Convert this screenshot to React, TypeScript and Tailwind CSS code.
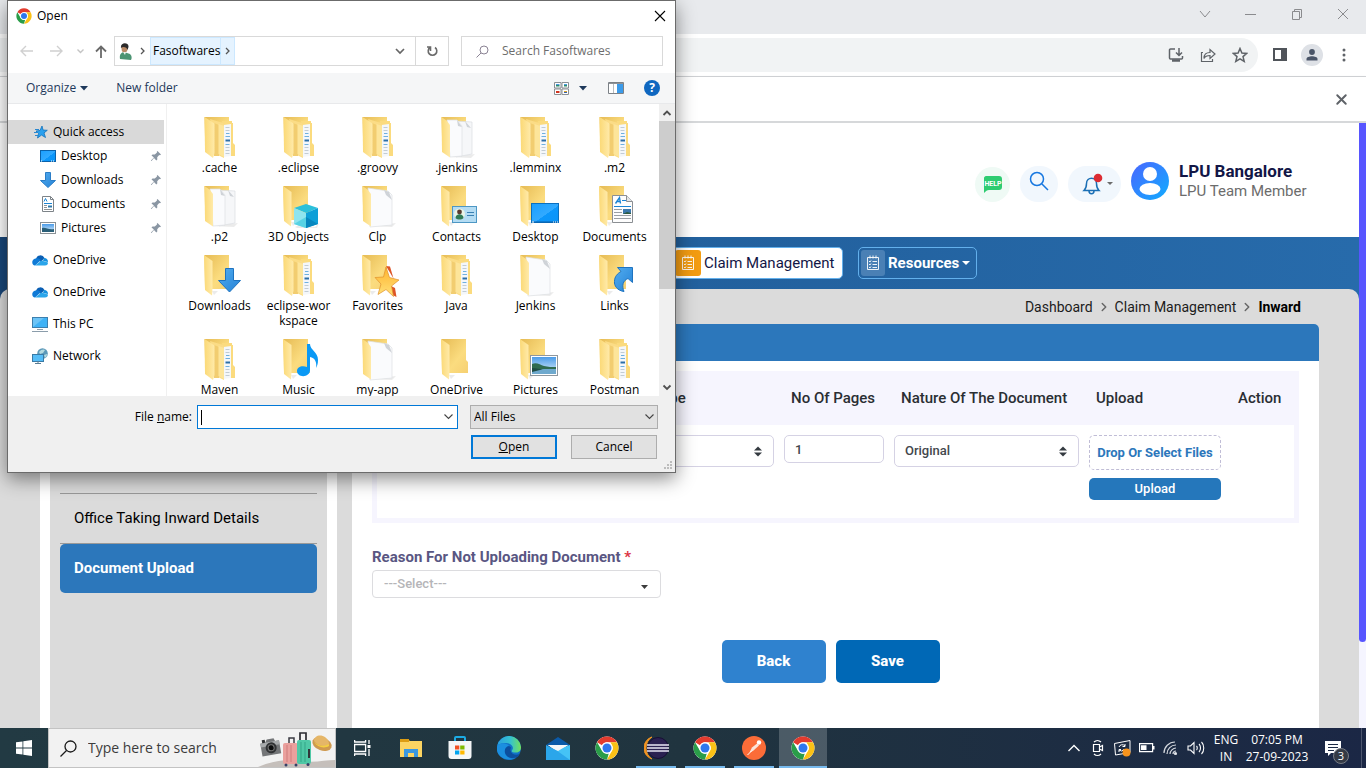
import React from "react";
import { ChevronRight, X } from "lucide-react";

type FolderKind = "files" | "doc" | "docs" | "plain";
type Overlay = "cube" | "contact" | "desktop" | "document" | "download" | "star" | "link" | "music" | "picture";

const folders: { name: string; kind: FolderKind; overlay?: Overlay }[] = [
  { name: ".cache", kind: "files" },
  { name: ".eclipse", kind: "files" },
  { name: ".groovy", kind: "files" },
  { name: ".jenkins", kind: "docs" },
  { name: ".lemminx", kind: "files" },
  { name: ".m2", kind: "files" },
  { name: ".p2", kind: "docs" },
  { name: "3D Objects", kind: "plain", overlay: "cube" },
  { name: "Clp", kind: "doc" },
  { name: "Contacts", kind: "plain", overlay: "contact" },
  { name: "Desktop", kind: "plain", overlay: "desktop" },
  { name: "Documents", kind: "plain", overlay: "document" },
  { name: "Downloads", kind: "plain", overlay: "download" },
  { name: "eclipse-wor kspace", kind: "files" },
  { name: "Favorites", kind: "plain", overlay: "star" },
  { name: "Java", kind: "files" },
  { name: "Jenkins", kind: "doc" },
  { name: "Links", kind: "plain", overlay: "link" },
  { name: "Maven", kind: "files" },
  { name: "Music", kind: "plain", overlay: "music" },
  { name: "my-app", kind: "doc" },
  { name: "OneDrive", kind: "plain" },
  { name: "Pictures", kind: "plain", overlay: "picture" },
  { name: "Postman", kind: "files" },
];

function Gradients() {
  return (
    <svg width="0" height="0" className="absolute" aria-hidden="true">
      <defs>
        <linearGradient id="flap" x1="0" x2="1" y1="0" y2="0">
          <stop offset="0" stopColor="#fbd976" />
          <stop offset="1" stopColor="#ffeaa9" />
        </linearGradient>
        <linearGradient id="back" x1="0" x2="1" y1="0" y2="1">
          <stop offset="0" stopColor="#e6bb54" />
          <stop offset="0.6" stopColor="#fbdc7f" />
          <stop offset="1" stopColor="#f6d072" />
        </linearGradient>
        <linearGradient id="screen" x1="0" x2="1" y1="0" y2="1">
          <stop offset="0" stopColor="#1a9fff" />
          <stop offset="0.55" stopColor="#32aaff" />
          <stop offset="0.56" stopColor="#0c97fb" />
          <stop offset="1" stopColor="#0a94f8" />
        </linearGradient>
        <linearGradient id="arrow" x1="0" x2="1" y1="0" y2="1">
          <stop offset="0" stopColor="#52adf0" />
          <stop offset="1" stopColor="#2582d6" />
        </linearGradient>
        <linearGradient id="sky" x1="0" x2="0" y1="0" y2="1">
          <stop offset="0" stopColor="#4a9be8" />
          <stop offset="1" stopColor="#e3f1fa" />
        </linearGradient>
        <linearGradient id="gold" x1="0" x2="0" y1="0" y2="1">
          <stop offset="0" stopColor="#ffb32e" />
          <stop offset="1" stopColor="#ffe27a" />
        </linearGradient>
        <linearGradient id="edgeTop" x1="0" x2="1" y1="0" y2="0">
          <stop offset="0" stopColor="#2a9fe0" />
          <stop offset="0.55" stopColor="#35c1cf" />
          <stop offset="1" stopColor="#72e05c" />
        </linearGradient>
        <linearGradient id="avatarBlue" x1="0" x2="1" y1="0" y2="1">
          <stop offset="0" stopColor="#4a66ff" />
          <stop offset="1" stopColor="#10adff" />
        </linearGradient>
      </defs>
    </svg>
  );
}

function OverlayArt({ kind }: { kind: Overlay }) {
  switch (kind) {
    case "cube":
      return (
        <g>
          <path d="M20 46l4-2 16 2 4-4-2 5H22z" fill="#000" opacity="0.08" />
          <path d="M19 27l12-4 12 4-12 5z" fill="#2bc0da" />
          <path d="M19 27l12 5v15l-12-4z" fill="#8ee4ee" />
          <path d="M19 43l12-7v11z" fill="#57d2e4" />
          <path d="M43 27l-12 5v15l12-4z" fill="#0d9fd8" />
          <path d="M43 43l-12-7v11z" fill="#0787bf" />
        </g>
      );
    case "contact":
      return (
        <g>
          <rect x="19.5" y="25.5" width="24" height="16" fill="#b4dcf3" stroke="#4d97c4" />
          <circle cx="26.500" cy="33" r="5.500" fill="#e9f4e6" />
          <circle cx="26.500" cy="31" r="2.400" fill="#5a3c2e" />
          <path d="M22.500 37c0-5 8-5 8 0-2 2-6 2-8 0z" fill="#2f7a55" />
          <path d="M34 31.500h7M34 34.500h7" stroke="#3a80b3" />
        </g>
      );
    case "desktop":
      return (
        <g>
          <rect x="19.500" y="22.500" width="27" height="19" fill="url(#screen)" stroke="#0a70c0" />
          <path d="M20 41h26" stroke="#0a5ea8" />
          <path d="M20 41h2M41 41h1M43 41h1M45 41h1" stroke="#fff" />
        </g>
      );
    case "document":
      return (
        <g>
          <path d="M21.500 14.500h14l6 6v21h-20z" fill="#fdfdfd" stroke="#8b8f93" />
          <path d="M35.500 14.500v6h6" fill="#e3e6e8" stroke="#8b8f93" />
          <path d="M24.500 22.500l4-6 1 6M26 20.500h3.500" stroke="#1a84d4" fill="none" strokeWidth="1.400" />
          <path d="M31 19.500h4M23 25.500h17" stroke="#1a84d4" />
          <path d="M23 28.500h8M23 31.500h8M23 34.500h17M23 37.500h17" stroke="#9a9fa3" />
          <rect x="32" y="28" width="8" height="5" fill="#3c79ad" />
          <path d="M32 33l4-2 4 1v1z" fill="#2d5b3f" />
        </g>
      );
    case "download":
      return <path d="M29.500 18.500h8v12h7L33.500 42 22.500 30.500h7z" fill="url(#arrow)" stroke="#1e73c0" />;
    case "star":
      return (
        <g>
          <path d="M32 16l4 .5 3.500 12z" fill="#dd5427" />
          <path d="M37 36l4 2 1.500 9-4-2z" fill="#dd5427" />
          <path d="M32 17l3.500 10.500 9.500 2.500-7.500 6 2 10.500-7.500-7-8 5 3-10.500-6-6.500 8.500-.5z" fill="url(#gold)" stroke="#e0902b" strokeWidth="0.700" />
        </g>
      );
    case "link":
      return <path d="M26.500 17.500h15v15l-4.500-4c-5 2-6.500 7-4 13-7-1-10-6-9.500-10 0-5 3-8 6.500-10z" fill="url(#arrow)" stroke="#1e73c0" />;
    case "music":
      return (
        <path d="M32 10h3c0 6 8 8 8 16 0 4-1 6-2 8 1-6-1-10-6-11v13c0 8-13 8-13 1 0-4 5-6 10-4z" fill="#0a99f5" />
      );
    case "picture":
      return (
        <g>
          <rect x="18.500" y="21.500" width="27" height="20" fill="#fff" stroke="#8f979d" />
          <rect x="20" y="23" width="24" height="17" fill="url(#sky)" />
          <path d="M20 30c5-2 8 1 12 2s8 1 12 1v2H20z" fill="#2f6b50" />
          <path d="M20 35h24v5H20z" fill="#6fa9cd" />
          <path d="M20 34c6 0 10 2 12 1l-12 3z" fill="#1f4d45" />
        </g>
      );
  }
}

function FolderIcon({ kind, overlay }: { kind: FolderKind; overlay?: Overlay }) {
  return (
    <svg width="48" height="48" viewBox="0 0 48 48" className="shrink-0" aria-hidden="true">
      {kind === "plain" && (
        <g>
          <path d="M16 41l6 0-4 4z" fill="#000" opacity="0.08" />
          <path d="M8.500 5H33v21l2 2v11H9z" fill="url(#back)" />
          <path d="M8 5l8.500 6v27l-.5 7.500L9 40z" fill="url(#flap)" />
        </g>
      )}
      {kind === "files" && (
        <g>
          <path d="M8.500 5H33v20H9z" fill="url(#back)" />
          <path d="M26 9h10v2h1v20l2 2v11H29z" fill="#fbdb7e" />
          <path d="M27.500 13l7.500-1v32l-7.500 1z" fill="#f4f7fa" />
          <path d="M29.500 15.500h4M29.500 18.500h4M29.500 35.500h4M29.500 38.500h4M29.500 41.500h4" stroke="#c3ccd4" />
          <path d="M30 21.500h3.500M29.500 24.500h4.500M29.500 32.500h4" stroke="#6fb0e0" />
          <path d="M29.500 28.500h4.500" stroke="#2c6ea8" strokeWidth="2" />
          <path d="M14 7l13 4 1 3v32l-6-3z" fill="#fbdc86" />
          <path d="M18 11l5 2v31h-5z" fill="#f2cd70" />
          <path d="M22.500 12l5.500 2v31l-5.500-3z" fill="#fde59a" />
          <path d="M8.500 5l10 6.500V41l-1.500 5L9 40z" fill="url(#flap)" />
        </g>
      )}
      {(kind === "doc" || kind === "docs") && (
        <g>
          <path d="M8.500 5H33v20H9z" fill="url(#back)" />
          <path d="M16 45l26-3-4 4z" fill="#000" opacity="0.08" />
          {kind === "docs" && (
            <path d="M22 9l17 1v32l-16 3z" fill="#f6f7f9" stroke="#dadde1" strokeWidth="0.700" />
          )}
          <path
            d={kind === "docs" ? "M14 8h10l5 6v30l-12 1z" : "M14 7l20 3 4 4v30l-22 2z"}
            fill="#fafbfd"
            stroke="#dcdfe3"
            strokeWidth="0.700"
          />
          {kind === "docs" ? (
            <path d="M24 8l1 6 4 1zM32 9l2 6 4 1z" fill="#cfd3d8" />
          ) : (
            <path d="M30 9l2 5 6 5-3-8z" fill="#cfd3d8" />
          )}
          <path d="M8.500 5l5.500 4 3 4v32.500L9 40z" fill="url(#flap)" />
        </g>
      )}
      {overlay && <OverlayArt kind={overlay} />}
    </svg>
  );
}

function ChromeLogo({ size }: { size: number }) {
  return (
    <svg width={size} height={size} viewBox="0 0 48 48" className="shrink-0" aria-hidden="true">
      <circle cx="24" cy="24" r="23" fill="#fff" />
      <path d="M24 1a23 23 0 0 1 19.900 11.500H24a11.500 11.500 0 0 0-10 5.800L4.100 12.500A23 23 0 0 1 24 1z" fill="#e33b2e" />
      <path d="M43.900 12.500A23 23 0 0 1 24 47l10-17.300a11.500 11.500 0 0 0 0-11.400l-3-5.800z" fill="#fbc116" />
      <path d="M4.100 12.500L14 29.700a11.500 11.500 0 0 0 13.500 5.300L24 47A23 23 0 0 1 4.100 12.500z" fill="#2a9d49" />
      <circle cx="24" cy="24" r="11.500" fill="#fff" />
      <circle cx="24" cy="24" r="9" fill="#2f77ee" />
    </svg>
  );
}

function Pin() {
  return (
    <svg width="12" height="12" viewBox="0 0 12 12" aria-hidden="true">
      <path d="M7.500 1L11 4.500l-1 .8-.8-.2-2 2.100.1 2.300-1 1-2.300-2.400L1.500 11H1v-.5l2.900-2.900L1.500 5.400l1-1 2.300.1L7 2.500 6.800 1.800z" fill="#8a96a3" />
    </svg>
  );
}

type SideIcon = "quick" | "desktop" | "downloads" | "documents" | "pictures" | "cloud" | "pc" | "network";

function SidebarIcon({ kind }: { kind: SideIcon }) {
  const art: Record<SideIcon, React.ReactNode> = {
    quick: (
      <g>
        <path d="M10 2l1 4 4.300.3-3.300 2.600 1.500 4.600-4-2.400L5.500 14l1-4.500L4 7l4-.5z" fill="#2aa0ee" stroke="#1272bd" strokeWidth="0.800" />
        <path d="M3 5.500h4M2 8.500h4M3 11.500h3" stroke="#2a87cf" />
      </g>
    ),
    desktop: (
      <g>
        <rect x="0.500" y="2.500" width="15" height="11" fill="url(#screen)" stroke="#0a62ab" />
        <path d="M1 13h1M11 13h1M13 13h1" stroke="#fff" />
      </g>
    ),
    downloads: <path d="M5.500.5h5v8h5L8 15.500.500 8.500h5z" fill="url(#arrow)" stroke="#2a7dc7" />,
    documents: (
      <g>
        <path d="M2.500.5h8l3 3v12h-11z" fill="#fff" stroke="#7d8388" />
        <path d="M10.500.5v3h3" fill="none" stroke="#7d8388" />
        <path d="M4 5.500l1.500-3 1.500 3M4 7.500h8" stroke="#1a84d4" fill="none" />
        <path d="M4 9.500h3M4 11.500h3M4 13.500h8" stroke="#8d9296" />
        <path d="M8 10.500h4" stroke="#2f78a8" strokeWidth="2" />
      </g>
    ),
    pictures: (
      <g>
        <rect x="0.500" y="2.500" width="15" height="11" fill="#fff" stroke="#8a9196" />
        <rect x="2" y="4" width="12" height="8" fill="url(#sky)" />
        <path d="M2 8c4-1 6 2 12 1v3H2z" fill="#2a5f78" />
      </g>
    ),
    cloud: (
      <g>
        <path d="M4 7a4.500 4.500 0 0 1 8.500-1L9 10z" fill="#0a5fb4" />
        <path d="M3.500 6.500C6 5.500 8 7 9 8l-6 5.500C-.5 13-1 7.500 3.500 6.500z" fill="#0f7ad6" />
        <path d="M12 6c3 0 4 2 4 4l-5-1z" fill="#1490df" />
        <path d="M3 13.500L9.500 8.500l6.500 2c0 2-1 3-3 3z" fill="#2aa5ea" />
      </g>
    ),
    pc: (
      <g>
        <rect x="0.500" y="1.500" width="15" height="10" fill="#6cc4f7" stroke="#3c7fae" />
        <path d="M1 11L12 2h3v9z" fill="#3fb2f6" />
        <path d="M5 13.500h6M0 15.500h16" stroke="#8b9dab" />
      </g>
    ),
    network: (
      <g>
        <circle cx="10.500" cy="5.500" r="5.300" fill="#5c99b9" />
        <path d="M7 4c2-3 5-3 6-2l-2 3-3 1zM12 7l3-1c0 2-1 3-2 4z" fill="#b4d9df" />
        <rect x="0.500" y="6.500" width="11" height="7" fill="#56bdf7" stroke="#3a7aa5" />
        <path d="M3 15.500h6M6 13v2" stroke="#5a7d94" />
      </g>
    ),
  };
  return (
    <svg width="16" height="16" viewBox="0 0 16 16" className="shrink-0" aria-hidden="true">
      {art[kind]}
    </svg>
  );
}

function SidebarItem({ icon, label, nested, selected }: { icon: SideIcon; label: string; nested?: boolean; selected?: boolean }) {
  return (
    <button
      type="button"
      className={
        "flex h-6 w-full items-center gap-[5px] pr-0.5 text-left " +
        (nested ? "pl-8 " : "pl-6 ") +
        (selected ? "bg-[#d9d9d9]" : "")
      }
    >
      <SidebarIcon kind={icon} />
      <span className="flex-1">{label}</span>
      {nested && <Pin />}
    </button>
  );
}

function FileDialog() {
  return (
    <section
      role="dialog"
      aria-label="Open"
      className="absolute left-[7px] top-0 z-10 flex h-[473px] w-[669px] flex-col border border-[#6b6b6b] bg-white font-['Open_Sans','Noto_Sans',sans-serif] text-xs text-black shadow-[0_6px_18px_rgba(0,0,0,0.45)]"
    >
      <header className="flex h-[30px] shrink-0 items-center pl-2 pr-[7px]">
        <ChromeLogo size={16} />
        <h1 className="ml-[5px] flex-1">Open</h1>
        <button type="button" aria-label="Close" className="p-0.5">
          <svg width="12" height="12" viewBox="0 0 12 12" fill="none" stroke="#000" strokeWidth="1.100"><path d="M1 1l10 10M11 1L1 11" /></svg>
        </button>
      </header>

      <div className="mt-[5px] flex h-[30px] shrink-0 items-stretch pr-3">
        <div className="flex w-[106px] items-center pl-3">
          <button type="button" aria-label="Back" className="w-[29px]">
            <svg width="14" height="12" viewBox="0 0 14 12" fill="none" stroke="#d0d0d0" strokeWidth="1.400"><path d="M6 1L1 6l5 5M1 6h12" /></svg>
          </button>
          <button type="button" aria-label="Forward" className="w-7">
            <svg width="14" height="12" viewBox="0 0 14 12" fill="none" stroke="#d0d0d0" strokeWidth="1.400"><path d="M8 1l5 5-5 5M13 6H1" /></svg>
          </button>
          <button type="button" aria-label="Recent locations" className="w-[18px]">
            <svg width="7" height="6" viewBox="0 0 7 6" fill="none" stroke="#c4c4c4" strokeWidth="1.400"><path d="M.5 1.500l3 3 3-3" /></svg>
          </button>
          <button type="button" aria-label="Up">
            <svg width="12" height="13" viewBox="0 0 12 13" fill="none" stroke="#6a6a6a" strokeWidth="1.800"><path d="M1 6.500l5-5 5 5M6 2v11" /></svg>
          </button>
        </div>
        <div className="flex flex-1 items-stretch border border-[#d9d9d9]">
          <span className="flex w-5 items-center justify-center">
            <svg width="13" height="17" viewBox="0 0 13 17" aria-hidden="true">
              <path d="M1 16c-1-5 2-7 4-7l6 2c2 2 2 4 1 6z" fill="#4c9473" />
              <ellipse cx="5.500" cy="5.500" rx="3" ry="4" fill="#b98a66" />
              <path d="M2 5c-1-6 8-6 7.500-1l-1 3C8 4 4 3 2 5z" fill="#2c2a2a" />
              <path d="M4 9l2 3 1-3z" fill="#eef2f0" />
            </svg>
          </span>
          <span className="flex w-[15px] items-center justify-center">
            <svg width="5" height="8" viewBox="0 0 5 8" fill="none" stroke="#555" strokeWidth="1.300"><path d="M1 1l3 3-3 3" /></svg>
          </span>
          <button type="button" className="flex w-[71px] items-center border border-[#cce8ff] bg-[#e5f3ff] pl-0.5">Fasoftwares</button>
          <button type="button" aria-label="Show subfolders" className="flex w-[14px] items-center justify-center border border-l-0 border-[#cce8ff] bg-[#e5f3ff]">
            <svg width="5" height="8" viewBox="0 0 5 8" fill="none" stroke="#555" strokeWidth="1.300"><path d="M1 1l3 3-3 3" /></svg>
          </button>
          <span className="flex-1" />
          <button type="button" aria-label="Previous locations" className="flex w-[30px] items-center justify-center">
            <svg width="10" height="7" viewBox="0 0 10 7" fill="none" stroke="#666" strokeWidth="1.700"><path d="M1 1l4 4 4-4" /></svg>
          </button>
          <button type="button" aria-label="Refresh" className="flex w-[33px] items-center justify-center border-l border-[#d9d9d9]">
            <svg width="12" height="12" viewBox="0 0 12 12" fill="none" stroke="#6a6a6a" strokeWidth="1.600"><path d="M9 2.500a4.300 4.300 0 1 1-5 0M4.500 6V2H1" /></svg>
          </button>
        </div>
        <label className="ml-3 flex w-[202px] items-center gap-[13px] border border-[#d9d9d9] pl-[14px] text-[#6d6d6d]">
          <svg width="13" height="13" viewBox="0 0 13 13" fill="none" stroke="#8b8394" aria-hidden="true"><circle cx="8" cy="5" r="4" /><path d="M5 8l-4.500 4.500" /></svg>
          <input aria-label="Search Fasoftwares" placeholder="Search Fasoftwares" className="min-w-0 flex-1 bg-transparent outline-none placeholder:text-[#6d6d6d]" />
        </label>
      </div>

      <div className="mt-[7px] flex h-[31px] shrink-0 items-center border-b border-[#e8e9eb] bg-[#f5f6f7] pl-[18px] pr-[15px] text-[#1e395b]">
        <button type="button" className="flex items-center gap-1">
          Organize
          <svg width="8" height="5" viewBox="0 0 8 5" aria-hidden="true"><path d="M0 0h8L4 4.500z" fill="#1e395b" /></svg>
        </button>
        <button type="button" className="ml-7 flex-1 text-left">New folder</button>
        <button type="button" aria-label="Change your view" className="flex items-center gap-[10px]">
          <svg width="15" height="13" viewBox="0 0 15 13" aria-hidden="true">
            <path d="M.5.5h6.500v5.500h-6.500zM8 .5h6.500v5.500H8zM.5 7h6.500v5.500h-6.500zM8 7h6.500v5.500H8z" fill="#fff" stroke="#8a8f94" />
            <path d="M2 3h3.500v1.500H2zM10 3h3v1.500h-3z" fill="#2f8a6b" />
            <path d="M2 2h3.500v1H2zM10 2h3v1h-3z" fill="#4b9be0" />
            <path d="M2 9h3.500v2H2z" fill="#d1341f" /><path d="M10 9h3v1h-3z" fill="#dfa72a" /><path d="M10 10h3v1h-3z" fill="#345ea8" />
          </svg>
          <svg width="8" height="5" viewBox="0 0 8 5" aria-hidden="true"><path d="M0 0h8L4 4.500z" fill="#1e395b" /></svg>
        </button>
        <button type="button" aria-label="Show the preview pane" className="ml-[21px]">
          <svg width="16" height="12" viewBox="0 0 16 12" aria-hidden="true">
            <path d="M.5.5h15v11H.5z" fill="#fff" stroke="#7c8186" /><path d="M1 1.500h14" stroke="#8e9398" />
            <path d="M5.500 2v9" stroke="#b8bcc0" /><path d="M9 2h6v9H9z" fill="#3b9bea" />
          </svg>
        </button>
        <button type="button" aria-label="Get help" className="ml-5 flex size-4 items-center justify-center rounded-full bg-[#0f67c0] text-xs font-bold leading-none text-white">?</button>
      </div>

      <div className="flex min-h-0 flex-1">
        <nav aria-label="Folders" className="flex w-[156px] flex-col gap-2 pt-4">
          <div>
            <SidebarItem icon="quick" label="Quick access" selected />
            <SidebarItem icon="desktop" label="Desktop" nested />
            <SidebarItem icon="downloads" label="Downloads" nested />
            <SidebarItem icon="documents" label="Documents" nested />
            <SidebarItem icon="pictures" label="Pictures" nested />
          </div>
          <SidebarItem icon="cloud" label="OneDrive" />
          <SidebarItem icon="cloud" label="OneDrive" />
          <SidebarItem icon="pc" label="This PC" />
          <SidebarItem icon="network" label="Network" />
        </nav>
        <div className="ml-0.5 min-w-0 flex-1 overflow-hidden border-l border-[#f0f0f0] pl-[13px] pt-2">
          <ul className="grid w-[474px] grid-cols-6 content-start gap-y-[6px]">
            {folders.map((f) => (
              <li key={f.name} className="flex flex-col items-center px-1 text-center leading-[15px]">
                <FolderIcon kind={f.kind} overlay={f.overlay} />
                <span>{f.name}</span>
              </li>
            ))}
          </ul>
        </div>
        <div className="flex w-4 flex-col items-center bg-[#f0f0f0]">
          <svg width="16" height="17" viewBox="0 0 16 17" fill="none" stroke="#505050" strokeWidth="1.800"><path d="M4.500 11L8 7.500l3.500 3.500" /></svg>
          <div className="h-[168px] w-full bg-[#cdcdcd]" />
          <span className="flex-1" />
          <svg width="16" height="17" viewBox="0 0 16 17" fill="none" stroke="#505050" strokeWidth="1.800"><path d="M4.500 6.500L8 10l3.500-3.500" /></svg>
        </div>
      </div>

      <footer className="relative shrink-0 bg-[#f0f0f0] pb-[13px] pt-[9px]">
        <div className="flex items-start pr-[17px]">
          <label htmlFor="file-name" className="w-[184px] pt-1 text-right">File <u>n</u>ame:</label>
          <div className="relative ml-[5px] mr-3 flex flex-1 items-center border border-[#0078d7] bg-white">
            <input id="file-name" className="h-[22px] min-w-0 flex-1 bg-transparent px-1 outline-none" />
            <span className="absolute left-[3px] h-[15px] w-px bg-black" />
            <svg width="9" height="6" viewBox="0 0 9 6" className="mr-1" fill="none" stroke="#444" strokeWidth="1.100"><path d="M.5.5l4 4 4-4" /></svg>
          </div>
          <div className="relative flex w-[188px] items-center">
            <select aria-label="File type" className="h-6 w-full appearance-none border border-[#adadad] bg-[#e1e1e1] px-[3px] outline-none">
              <option>All Files</option>
            </select>
            <svg width="9" height="6" viewBox="0 0 9 6" className="pointer-events-none absolute right-1" fill="none" stroke="#444" strokeWidth="1.100"><path d="M.5.5l4 4 4-4" /></svg>
          </div>
        </div>
        <div className="mt-[6px] flex justify-end gap-[14px] pr-[18px]">
          <button type="button" className="h-6 w-[86px] border-2 border-[#0078d7] bg-[#e1e1e1]"><u>O</u>pen</button>
          <button type="button" className="h-6 w-[86px] border border-[#adadad] bg-[#e1e1e1]">Cancel</button>
        </div>
        <svg width="9" height="9" viewBox="0 0 9 9" className="absolute bottom-0.5 right-0.5" fill="#bcbcbc" aria-hidden="true">
          <path d="M6 0h2v2H6zM3 3h2v2H3zM6 3h2v2H6zM0 6h2v2H0zM3 6h2v2H3zM6 6h2v2H6z" />
        </svg>
      </footer>
    </section>
  );
}

function BrowserChrome() {
  return (
    <header className="shrink-0">
      <div className="flex h-[34px] items-start justify-end bg-[#e8eaed]">
        {[
          ["Search tabs", "M1 3l5 6 5-6"],
          ["Minimize", "M0 6.500h11"],
          ["Restore", "M1.500 3.500h7v8h-7zM3.500 3.500v-2h7v8h-2"],
          ["Close window", "M1 1l10 10M11 1L1 11"],
        ].map(([name, d]) => (
          <button key={name} type="button" aria-label={name} className="flex h-7 w-[46px] items-center justify-center">
            <svg width="12" height="12" viewBox="0 0 12 12" fill="none" stroke="#8a8b8e"><path d={d} /></svg>
          </button>
        ))}
      </div>
      <div className="flex h-[43px] items-center border-b border-[#d5d7da] bg-white pr-[14px]">
        <div className="flex h-[34px] flex-1 items-center justify-end gap-4 rounded-r-full bg-[#f1f3f4] pr-[10px] text-[#5f6368]">
          <button type="button" aria-label="Install app">
            <svg width="16" height="16" viewBox="0 0 16 16" fill="none" stroke="currentColor" strokeWidth="1.500"><path d="M7 2H2.500A1 1 0 0 0 1.500 3v8a1 1 0 0 0 1 1h11a1 1 0 0 0 1-1V9M11 1v7M8 5.500l3 3 3-3" /><path d="M4 13.500h8" strokeWidth="2.500" /></svg>
          </button>
          <button type="button" aria-label="Share">
            <svg width="16" height="16" viewBox="0 0 16 16" fill="none" stroke="currentColor" strokeWidth="1.200"><path d="M3 5.500H1.500v9h11V12M4 11.500c0-4 2-6 6-6V2.500l5 4.500-5 4.500v-3c-3 0-5 1-6 3z" /></svg>
          </button>
          <button type="button" aria-label="Bookmark">
            <svg width="16" height="16" viewBox="0 0 16 16" fill="none" stroke="currentColor" strokeWidth="1.500"><path d="M8 1.500l1.900 4.600 4.800.3-3.700 3.200 1.200 4.800L8 11.800l-4.200 2.600L5 9.600 1.300 6.400l4.800-.3z" /></svg>
          </button>
        </div>
        <button type="button" aria-label="Side panel" className="ml-[14px] text-[#50545a]">
          <svg width="16" height="16" viewBox="0 0 16 16"><path d="M1 1h14v13H1zM3 3v9h6V3z" fill="currentColor" fillRule="evenodd" /></svg>
        </button>
        <button type="button" aria-label="Profile" className="ml-[13px] flex size-[22px] items-center justify-center rounded-full bg-[#dee1e6]">
          <svg width="14" height="14" viewBox="0 0 14 14" fill="#4a5568"><circle cx="7" cy="4" r="2.900" /><path d="M1.500 12.500v-1.500c0-3.600 11-3.600 11 0v1.500z" /></svg>
        </button>
        <button type="button" aria-label="Menu" className="ml-[13px] flex w-4 justify-center">
          <svg width="4" height="14" viewBox="0 0 4 14" fill="#5f6368"><circle cx="2" cy="2" r="1.500" /><circle cx="2" cy="7" r="1.500" /><circle cx="2" cy="12" r="1.500" /></svg>
        </button>
      </div>
      <div className="flex h-[46px] items-center justify-end border-b-2 border-[#d6d8da] bg-white pr-4 shadow-[0_1px_3px_rgba(0,0,0,0.2)]">
        <button type="button" aria-label="Dismiss" className="text-[#5f6368]"><X size={17} strokeWidth={2.750} /></button>
      </div>
    </header>
  );
}

function ChecklistIcon() {
  return (
    <svg width="14" height="16" viewBox="0 0 14 16" fill="none" stroke="#fff" aria-hidden="true">
      <path d="M1.500 2.500h11v12h-11zM4 .5v3M7 .5v3M10 .5v3" opacity="0.900" />
      <path d="M3 6l1 1 1-1.500M3 9l1 1 1-1.500M3 12l1 1 1-1.500M6.500 6.500H11M6.500 9.500H11M6.500 12.500H11" opacity="0.900" />
    </svg>
  );
}

function SiteHeader() {
  return (
    <>
      <div className="flex h-[114px] shrink-0 items-center justify-end bg-white pr-11 pt-0.5">
        <button type="button" aria-label="Help" className="mt-[7px] flex size-[35px] items-center justify-center rounded-full bg-[#effaf5]">
          <svg width="20" height="18" viewBox="0 0 20 18" aria-hidden="true">
            <path d="M3 0h13a3 3 0 0 1 3 3v8a3 3 0 0 1-3 3H6c-2 0-3 1-5 3V2C1 1 2 0 3 0z" fill="#2ecc71" />
            <text x="10" y="9.500" textAnchor="middle" fontSize="7" fontWeight="700" fill="#fff" fontFamily="Roboto, sans-serif">HELP</text>
          </svg>
        </button>
        <button type="button" aria-label="Search" className="ml-[10px] mt-[5px] flex h-9 w-[38px] items-center justify-center rounded-full bg-[#f1f7fd]">
          <svg width="20" height="20" viewBox="0 0 20 20" fill="none" stroke="#1677e0" strokeWidth="1.500" className="mb-[5px]"><circle cx="8" cy="8" r="6.500" /><path d="M13 13l6 6" /></svg>
        </button>
        <button type="button" aria-label="Notifications" className="ml-[10px] mt-[5px] flex h-9 w-[53px] items-center justify-center gap-[3px] rounded-full bg-[#f1f7fd]">
          <svg width="22" height="22" viewBox="0 0 22 22" className="ml-[5px]" fill="none" stroke="#1b6fb5" strokeWidth="1.500">
            <path d="M2 17.500h15c-2-2-2.500-3-2.500-7 0-7-10-7-10 0 0 4-.5 5-2.500 7zM7 18c0 3.500 5 3.500 5 0" />
            <circle cx="16" cy="5" r="4.300" fill="#dc2c33" stroke="none" />
          </svg>
          <svg width="6" height="3" viewBox="0 0 6 3"><path d="M0 0h6L3 3z" fill="#6b6b6b" /></svg>
        </button>
        <svg width="38" height="38" viewBox="0 0 38 38" className="ml-[10px] shrink-0" aria-hidden="true">
          <circle cx="19" cy="19" r="19" fill="url(#avatarBlue)" />
          <circle cx="19" cy="12" r="7" fill="#fff" />
          <ellipse cx="19" cy="27" rx="10.500" ry="6" fill="#fff" />
        </svg>
        <div className="ml-[10px] w-[136px] whitespace-nowrap">
          <p className="text-[17px] font-bold leading-5 text-[#121646]">LPU Bangalore</p>
          <p className="text-[15px] leading-5 text-[#6c6c6c]">LPU Team Member</p>
        </div>
      </div>
      <div className="shrink-0 bg-linear-to-r from-[#19477a] via-[#22609d] to-[#276bab]">
        <nav aria-label="Main" className="flex h-[52px] items-center gap-[15px] pl-[672px] text-[#121646]">
          <a href="#claims" className="flex h-8 w-[171px] items-center gap-[3px] whitespace-nowrap rounded-[5px] border border-[#63b0ec] bg-white pl-[2px]">
            <span className="flex size-[26px] shrink-0 items-center justify-center rounded-[3px] bg-[#f39c12]"><ChecklistIcon /></span>
            <span className="text-[15px]">Claim Management</span>
          </a>
          <button type="button" className="flex h-8 w-[119px] items-center whitespace-nowrap rounded-[5px] border border-[#63b0ec] pl-[2px] text-white">
            <span className="mr-[3px] flex h-[26px] w-6 shrink-0 items-center justify-center rounded-[3px] bg-[#4a80b5]"><ChecklistIcon /></span>
            <span className="text-[15px] font-bold">Resources</span>
            <svg width="8" height="4" viewBox="0 0 8 4" className="ml-[3px]"><path d="M0 0h8L4 4z" fill="#fff" /></svg>
          </button>
        </nav>
      </div>
    </>
  );
}

function SortArrows() {
  return (
    <svg width="8" height="11" viewBox="0 0 8 11" className="pointer-events-none absolute right-3" fill="#343a40" aria-hidden="true">
      <path d="M0 4.500L4 .5l4 4zM0 6.500l4 4 4-4z" />
    </svg>
  );
}

function UploadTable() {
  return (
    <table className="w-full table-fixed border-separate border-spacing-0 border-[5px] border-t-0 border-[#f6f5fe] text-left">
      <thead className="bg-[#f6f5fe] text-[15px] text-[#2a2e33]">
        <tr className="h-[54px] whitespace-nowrap">
          <td />
          <th className="w-[210px] px-3 font-medium">Document Type</th>
          <th className="w-[110px] px-3 font-medium">No Of Pages</th>
          <th className="w-[195px] px-3 font-medium">Nature Of The Document</th>
          <th className="w-[142px] px-3 font-medium">Upload</th>
          <th className="w-[68px] px-3 font-medium">Action</th>
        </tr>
      </thead>
      <tbody className="align-top text-[13px] font-medium text-[#43474d]">
        <tr className="h-[93px]">
          <td />
          <td className="px-[5px] pt-[10px]">
            <div className="relative flex items-center">
              <select aria-label="Document Type" className="h-8 w-full appearance-none rounded-[5px] border border-[#d5d2e4] bg-white px-[10px]"><option /></select>
              <SortArrows />
            </div>
          </td>
          <td className="px-[5px] pt-[10px]">
            <input aria-label="No Of Pages" defaultValue="1" className="block h-7 w-full rounded-[5px] border border-[#d5d2e4] bg-white px-[10px]" />
          </td>
          <td className="px-[5px] pt-[10px]">
            <div className="relative flex items-center">
              <select aria-label="Nature Of The Document" className="h-8 w-full appearance-none rounded-[5px] border border-[#d5d2e4] bg-white px-[10px]"><option>Original</option></select>
              <SortArrows />
            </div>
          </td>
          <td className="px-[5px] pt-[10px]">
            <button type="button" className="block h-[35px] w-full whitespace-nowrap rounded-[5px] border border-dashed border-[#c0bdd6] text-[13px] font-bold text-[#2c77bb]">Drop Or Select Files</button>
            <button type="button" className="mt-2 block h-[22px] w-full rounded-[5px] bg-[#2577bb] text-[13px] font-medium text-white">Upload</button>
          </td>
          <td />
        </tr>
      </tbody>
    </table>
  );
}

function ClaimPage() {
  return (
    <div className="flex min-h-0 flex-1 bg-[#f5f5ff]">
      <div className="flex min-w-0 flex-1 flex-col overflow-hidden font-[Roboto,sans-serif]">
        <SiteHeader />
        <div className="flex min-h-0 flex-1 bg-linear-to-r from-[#19477a] to-[#276bab]">
          <main className="flex min-w-0 flex-1 flex-col rounded-t-[10px] bg-[#dbdbdb] px-10">
            <nav aria-label="Breadcrumb" className="flex h-[35px] shrink-0 items-center justify-end gap-1 pr-[18px] text-sm text-[#1c1c1c]">
              <a href="#dashboard">Dashboard</a>
              <ChevronRight size={14} strokeWidth={2.500} className="text-[#666]" />
              <a href="#claims">Claim Management</a>
              <ChevronRight size={14} strokeWidth={2.500} className="text-[#666]" />
              <span className="font-bold text-black">Inward</span>
            </nav>
            <div className="flex min-h-0 flex-1 gap-[15px]">
              <aside className="w-[297px] shrink-0 bg-white px-[10px]">
                <div className="h-full bg-[#dbdbdb] px-[10px] pt-[120px] text-[15px] text-black">
                  <a href="#inward" className="flex h-[50px] items-center border-b border-[#999] px-[14px]">Inward Document Details</a>
                  <a href="#office" className="flex h-[50px] items-center border-b border-[#999] px-[14px]">Office Taking Inward Details</a>
                  <a href="#upload" className="flex h-[49px] items-center rounded-[5px] bg-[#2c77bb] px-[14px] font-bold text-white">Document Upload</a>
                </div>
              </aside>
              <section className="min-w-0 flex-1 rounded-t-[5px] bg-white">
                <div className="h-[37px] rounded-t-[5px] bg-[#2c77bb]" />
                <form className="px-5 pt-[10px]">
                  <UploadTable />
                  <div className="mt-[25px]">
                    <label htmlFor="reason" className="block pb-[3px] text-[15px] font-bold leading-[19px] text-[#595682]">
                      Reason For Not Uploading Document <span className="text-[#dc3545]">*</span>
                    </label>
                    <div className="relative flex w-[289px] items-center">
                      <select id="reason" className="h-7 w-full appearance-none rounded-[4px] border border-[#dcdcdf] bg-white px-[11px] text-[13px] font-medium text-[#b5b5b8]"><option>---Select---</option></select>
                      <svg width="7" height="4" viewBox="0 0 7 4" className="pointer-events-none absolute bottom-[9px] right-[13px]"><path d="M0 0h7L3.500 4z" fill="#3c3c3c" /></svg>
                    </div>
                  </div>
                  <div className="mt-[42px] flex justify-center gap-[10px] pr-[10px] text-[15px] font-extrabold text-white">
                    <button type="button" className="h-[43px] w-[104px] rounded-[5px] bg-[#2f82cf]">Back</button>
                    <button type="button" className="h-[43px] w-[104px] rounded-[5px] bg-[#0068b6]">Save</button>
                  </div>
                </form>
              </section>
            </div>
          </main>
        </div>
      </div>
      <div className="w-[7px] shrink-0"><div className="h-[519px] rounded-b-full bg-[#5755ff]" /></div>
    </div>
  );
}

function TaskButton({ label, open, active, children }: { label: string; open?: boolean; active?: boolean; children: React.ReactNode }) {
  return (
    <button
      type="button"
      aria-label={label}
      className={"relative flex h-10 w-12 items-center justify-center " + (active ? "bg-white/20" : "")}
    >
      {children}
      {(open || active) && <span className={"absolute bottom-0 h-0.5 bg-[#76b9ed] " + (active ? "inset-x-0" : "inset-x-1")} />}
    </button>
  );
}

function Taskbar() {
  return (
    <footer className="flex h-10 shrink-0 items-stretch bg-linear-to-r from-[#223a43] via-[#20343f] to-[#1b2745] font-['Open_Sans','Noto_Sans',sans-serif] text-white">
      <button type="button" aria-label="Start" className="flex w-12 items-center justify-center">
        <svg width="16" height="16" viewBox="0 0 16 16" fill="#fff"><path d="M0 2.300L6.500 1.400v6.200H0zM7.300 1.300L16 0v7.600H7.300zM0 8.400h6.500v6.200L0 13.700zM7.300 8.400H16V16l-8.700-1.300z" /></svg>
      </button>
      <label className="flex w-[288px] items-center border border-[#c3c3c3] bg-[#f2f2f2] pl-[11px]">
        <svg width="17" height="17" viewBox="0 0 17 17" fill="none" stroke="#1a1a1a" strokeWidth="1.300" aria-hidden="true"><circle cx="10.500" cy="6.500" r="5.500" /><path d="M6.500 10.500L.5 16.500" /></svg>
        <input aria-label="Type here to search" placeholder="Type here to search" className="ml-[11px] w-[150px] bg-transparent text-sm outline-none placeholder:text-[#3c3c3c]" />
        <svg width="77" height="38" viewBox="0 0 77 38" className="ml-auto" aria-hidden="true">
          <path d="M0 38c16-7 32-8 44-6s24-1 33-1v7z" fill="#c5bfbb" />
          <g transform="rotate(-10 12 18)">
            <path d="M3 13h5l2-3h7l1 3h4v13H3z" fill="#747678" />
            <path d="M3 13h19v4H3z" fill="#a7aaac" />
            <circle cx="13" cy="19" r="5.500" fill="#303234" /><circle cx="13" cy="19" r="3" fill="#0b0c0d" stroke="#777" />
            <path d="M5 10h3v3H5z" fill="#2f3133" />
          </g>
          <path d="M31 15V9h5v6" fill="none" stroke="#3a3a42" strokeWidth="1.500" />
          <rect x="25" y="14" width="15" height="21" rx="2" fill="#eaa09d" />
          <path d="M29 16v17M33 16v17" stroke="#cf7d7c" />
          <path d="M42 12V4h6v8" fill="none" stroke="#2d2d33" strokeWidth="1.700" />
          <rect x="39" y="11" width="14" height="24" rx="2" fill="#4fc8a6" />
          <path d="M43 13v20M47 13v20" stroke="#35a587" />
          <path d="M50 20h2v9h-2z" fill="#31363a" />
          <circle cx="28" cy="36" r="1.500" fill="#384066" /><circle cx="38" cy="36" r="1.500" fill="#384066" /><circle cx="50" cy="35.500" r="1.500" fill="#384066" />
          <ellipse cx="64" cy="15" rx="10" ry="6.500" fill="#cf9a50" transform="rotate(20 64 15)" />
          <path d="M56 12c0-7 12-8 15 2 0 5-11 4-15-2z" fill="#e5b668" />
          <path d="M56 13c4 4 10 5 15 2v2c-5 3-12 1-15-4z" fill="#f4cf42" />
        </svg>
      </label>
      <div className="ml-0.5 flex flex-1 gap-px">
        <TaskButton label="Task View">
          <svg width="17" height="16" viewBox="0 0 17 16" fill="none" stroke="#fff" strokeWidth="1.300"><path d="M.6 4.500h11v7h-11zM.6 0v2h11V0M.6 16v-2h11v2M15 0v4M15 9v7" /><path d="M13.500 5h3v3h-3z" fill="#fff" stroke="none" /></svg>
        </TaskButton>
        <TaskButton label="File Explorer">
          <svg width="22" height="20" viewBox="0 0 22 20"><path d="M0 1h8l2 2H0z" fill="#e2a21a" /><path d="M0 3h22v16H0z" fill="#fcd462" /><path d="M0 1h9v3H0z" fill="#dd9d13" /><path d="M4 11h14v8h-4v-4H8v4H4z" fill="#3a97e0" /></svg>
        </TaskButton>
        <TaskButton label="Microsoft Store">
          <svg width="24" height="24" viewBox="0 0 24 24"><path d="M7 5V2a1 1 0 0 1 1-1h8a1 1 0 0 1 1 1v3" fill="none" stroke="#1cabe4" strokeWidth="2" /><path d="M.5 5h23v15a3 3 0 0 1-3 3h-17a3 3 0 0 1-3-3z" fill="#f4f6f7" /><path d="M7 9.500h4.300v4H7z" fill="#f25022" /><path d="M12.200 9.500h4.300v4h-4.300z" fill="#7fba00" /><path d="M7 14.500h4.300v4H7z" fill="#00a4ef" /><path d="M12.200 14.500h4.300v4h-4.300z" fill="#ffb900" /></svg>
        </TaskButton>
        <TaskButton label="Microsoft Edge">
          <svg width="24" height="24" viewBox="0 0 24 24">
            <circle cx="12" cy="12" r="12" fill="#1272c9" />
            <path d="M.3 9.500A12 12 0 0 1 24 11c.2 5-4 6-7 5.500s-2.500-2-1.500-3C17 11 14 7 9 7S1 8.500.3 9.500z" fill="url(#edgeTop)" />
            <path d="M.3 9.500C2 6.500 10 6 12 10c-3 0-5 3-4 7s6 7 11 5C12 26-3 22 .3 9.500z" fill="#1b8fe0" />
            <path d="M12 10c-4 1-5 5-3.500 8s6 5.500 12 3c1-1 2-2 2-3-3 1.500-8 1-9-3.500-.3-2 .5-2 .5-3z" fill="#0c4f9e" />
          </svg>
        </TaskButton>
        <TaskButton label="Mail">
          <svg width="24" height="23" viewBox="0 0 24 23"><path d="M0 8l12-8 12 8-12 5z" fill="#0b5aa8" /><path d="M2 8h20l-10 8z" fill="#f5f7f8" /><path d="M0 8l12 6 12-6v15H0z" fill="#2ba6ea" /><path d="M24 8v15L10 13z" fill="#45c3f6" /><path d="M2 8h20l-10 6z" fill="#f5f7f8" /></svg>
        </TaskButton>
        <TaskButton label="Google Chrome"><ChromeLogo size={24} /></TaskButton>
        <TaskButton label="Eclipse" open>
          <svg width="25" height="24" viewBox="0 0 25 24"><path d="M8 1A11.500 11.500 0 0 0 8 23 13 13 0 0 1 8 1z" fill="#f29422" stroke="#f29422" /><circle cx="14" cy="12" r="10.500" fill="#2b2151" stroke="#170f35" /><path d="M3 9h22M3 12h22M3 15h22" stroke="#e9e6f4" strokeWidth="1.600" /></svg>
        </TaskButton>
        <TaskButton label="Google Chrome, Work" open><ChromeLogo size={24} /></TaskButton>
        <TaskButton label="Postman" open>
          <svg width="24" height="24" viewBox="0 0 24 24"><circle cx="12" cy="12" r="12" fill="#fb6c38" /><path d="M7.500 16.500l2.500-5 5-4 2 2-5.500 5-2.500 1.500z" fill="#fbe4d9" /><circle cx="17" cy="6.500" r="2.200" fill="#fff" /><path d="M5.500 19l4-4" stroke="#fff" /></svg>
        </TaskButton>
        <TaskButton label="Google Chrome, Claims" active><ChromeLogo size={24} /></TaskButton>
      </div>
      <div className="flex items-center gap-2 pr-1">
        <svg width="16" height="16" viewBox="0 0 16 16" fill="none" stroke="#fff" strokeWidth="1.400"><path d="M2.500 11L8 5.500l5.500 5.500" /></svg>
        <svg width="16" height="18" viewBox="0 0 16 18" fill="none" stroke="#fff" strokeWidth="1.200"><path d="M3.500 5.500h6v7h-6zM9.500 8l3-1.500v5l-3-1.500M4 3c2-2 5-2 7 0M4 15c2 2 5 2 7 0" /></svg>
        <svg width="17" height="17" viewBox="0 0 17 17" fill="none" stroke="#fff"><path d="M.5 3.500L16 .5v12L1.500 15zM5 7a3.500 3.500 0 0 1 6-1M11 4v2.500H8.500M10 9.500A3.500 3.500 0 0 1 5 10M5 12V9.500h2" /><circle cx="12.500" cy="12.500" r="4" fill="#f7941d" stroke="none" /></svg>
        <svg width="16" height="10" viewBox="0 0 16 10"><path d="M.6.6h13v8h-13z" fill="none" stroke="#fff" strokeWidth="1.200" /><path d="M2 2.300h5.500v4.800H2zM14 3h1.500v3.500H14z" fill="#fff" /></svg>
        <svg width="16" height="14" viewBox="0 0 16 14" fill="none" stroke="#d4d8de" strokeWidth="1.200"><path d="M1 12C1 6 6 1 12 1M4 13c0-5 4-9 9-9M7 13c0-3 3-6 6-6M10 13c0-2 1-3 3-3" /><circle cx="12.500" cy="12.500" r="1" fill="#fff" /></svg>
        <svg width="18" height="14" viewBox="0 0 18 14" fill="none" stroke="#fff" strokeWidth="1.100"><path d="M1 5h2.500L7 1.500v11L3.500 9H1zM9.500 5c1 1 1 3 0 4M12 3c2 2 2 6 0 8M14.500 1c3 3 3 9 0 12" /></svg>
        <div className="w-[26px] text-center text-xs leading-[17px]"><p>ENG</p><p>IN</p></div>
        <div className="w-[60px] whitespace-nowrap text-center text-xs leading-[17px]"><p>07:05 PM</p><p className="flex justify-center">27-09-2023</p></div>
        <button type="button" aria-label="3 notifications" className="relative ml-[10px] flex w-7 items-center">
          <svg width="16" height="15" viewBox="0 0 16 15" aria-hidden="true"><path d="M0 0h16v12H6l-3 3v-3H0z" fill="#fff" /><path d="M3 3.500h10M3 6.500h10M3 9.500h6" stroke="#1c2a45" /></svg>
          <span className="absolute left-2 top-[7px] flex size-4 items-center justify-center rounded-full border border-[#777c85] bg-[#343a45] text-[11px] leading-none">3</span>
        </button>
        <span className="h-full w-px bg-[#4d566e]" />
      </div>
    </footer>
  );
}

export default function App() {
  return (
    <div className="relative flex h-screen flex-col overflow-hidden bg-white">
      <Gradients />
      <BrowserChrome />
      <ClaimPage />
      <FileDialog />
      <Taskbar />
    </div>
  );
}
